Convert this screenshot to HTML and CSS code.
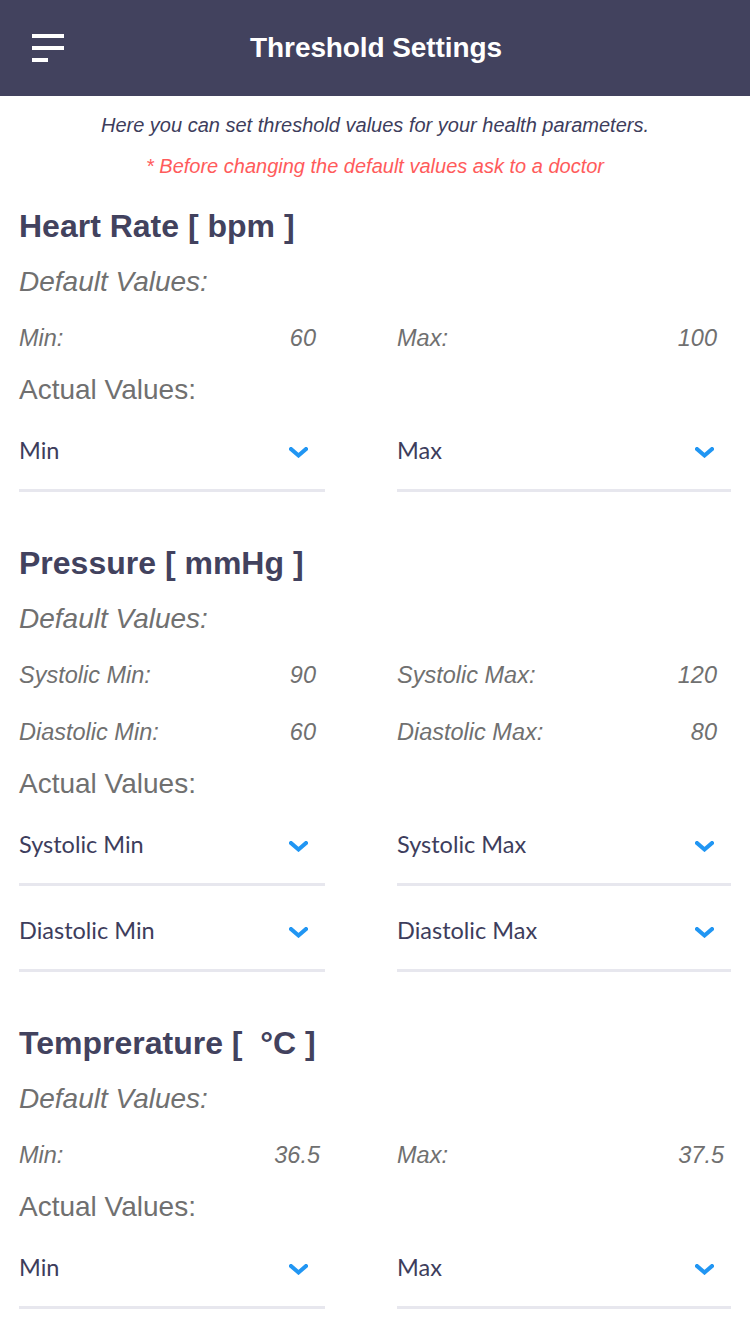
FILE: index.html
```html
<!DOCTYPE html>
<html lang="en">
<head>
<meta charset="utf-8">
<title>Threshold Settings</title>
<link rel="stylesheet" href="styles.css">
</head>
<body>
<header class="topbar">
  <div class="menu" aria-label="menu">
    <span class="bar"></span>
    <span class="bar"></span>
    <span class="bar bar-short"></span>
  </div>
  <h1 class="title">Threshold Settings</h1>
  <div class="spacer"></div>
</header>

<main class="content">
  <p class="intro">Here you can set threshold values for your health parameters.</p>
  <p class="note">* Before changing the default values ask to a doctor</p>

  <section class="param">
    <h2 class="param-title">Heart Rate [ bpm ]</h2>
    <p class="group-label defaults">Default Values:</p>
    <div class="grid rows">
      <div class="dv"><span>Min:</span><span>60</span></div>
      <div class="dv dv-right"><span>Max:</span><span>100</span></div>
    </div>
    <p class="group-label actual">Actual Values:</p>
    <div class="grid selects">
      <div class="select"><span>Min</span><svg class="chev" viewBox="0 0 19 11"><polyline points="2,2 9.5,8.5 17,2"/></svg></div>
      <div class="select"><span>Max</span><svg class="chev" viewBox="0 0 19 11"><polyline points="2,2 9.5,8.5 17,2"/></svg></div>
    </div>
  </section>

  <section class="param">
    <h2 class="param-title">Pressure [ mmHg ]</h2>
    <p class="group-label defaults">Default Values:</p>
    <div class="grid rows">
      <div class="dv"><span>Systolic Min:</span><span>90</span></div>
      <div class="dv dv-right"><span>Systolic Max:</span><span>120</span></div>
      <div class="dv"><span>Diastolic Min:</span><span>60</span></div>
      <div class="dv dv-right"><span>Diastolic Max:</span><span>80</span></div>
    </div>
    <p class="group-label actual">Actual Values:</p>
    <div class="grid selects">
      <div class="select"><span>Systolic Min</span><svg class="chev" viewBox="0 0 19 11"><polyline points="2,2 9.5,8.5 17,2"/></svg></div>
      <div class="select"><span>Systolic Max</span><svg class="chev" viewBox="0 0 19 11"><polyline points="2,2 9.5,8.5 17,2"/></svg></div>
      <div class="select"><span>Diastolic Min</span><svg class="chev" viewBox="0 0 19 11"><polyline points="2,2 9.5,8.5 17,2"/></svg></div>
      <div class="select"><span>Diastolic Max</span><svg class="chev" viewBox="0 0 19 11"><polyline points="2,2 9.5,8.5 17,2"/></svg></div>
    </div>
  </section>

  <section class="param">
    <h2 class="param-title">Temprerature [ &nbsp;°C ]</h2>
    <p class="group-label defaults">Default Values:</p>
    <div class="grid rows">
      <div class="dv dv-wide"><span>Min:</span><span>36.5</span></div>
      <div class="dv dv-right dv-wide"><span>Max:</span><span>37.5</span></div>
    </div>
    <p class="group-label actual">Actual Values:</p>
    <div class="grid selects">
      <div class="select"><span>Min</span><svg class="chev" viewBox="0 0 19 11"><polyline points="2,2 9.5,8.5 17,2"/></svg></div>
      <div class="select"><span>Max</span><svg class="chev" viewBox="0 0 19 11"><polyline points="2,2 9.5,8.5 17,2"/></svg></div>
    </div>
  </section>
</main>
</body>
</html>
```

FILE: styles.css
```css
* { box-sizing: border-box; }

html, body {
  margin: 0;
  padding: 0;
  background: #ffffff;
}

body {
  font-family: "Liberation Sans", Arial, sans-serif;
  width: 750px;
  overflow-x: hidden;
}

p, h1, h2 { margin: 0; }

/* Top bar */
.topbar {
  height: 96px;
  background: #42425e;
  display: grid;
  grid-template-columns: 1fr auto 1fr;
  align-items: center;
}

.menu {
  padding-left: 32px;
  display: flex;
  flex-direction: column;
  gap: 8px;
}

.bar {
  display: block;
  width: 32px;
  height: 4px;
  background: #ffffff;
}

.bar-short { width: 16px; }

.title {
  font-size: 28px;
  font-weight: 700;
  color: #ffffff;
  line-height: 32px;
  padding-left: 2px;
  letter-spacing: -0.1px;
}

/* Content */
.content {
  padding: 17px 0 0 19px;
}

.intro, .note {
  font-style: italic;
  font-size: 20px;
  line-height: 24px;
  text-align: center;
  margin-left: -19px;
}

.intro { color: #3d3d5c; }

.note {
  color: #ff5b5b;
  margin-top: 17px;
}

.param { padding-top: 30px; }
.param + .param { padding-top: 53px; }

.param-title {
  font-size: 32px;
  font-weight: 700;
  line-height: 36px;
  color: #42425e;
}

.group-label {
  font-size: 28px;
  line-height: 32px;
  color: #707070;
}

.defaults {
  font-style: italic;
  margin-top: 22px;
}

.actual { margin-top: 23px; }

.grid {
  display: grid;
  grid-template-columns: 306px 334px;
  column-gap: 72px;
}

.rows {
  margin-top: 27px;
  row-gap: 31px;
}

.dv {
  display: flex;
  justify-content: space-between;
  font-style: italic;
  font-size: 23.5px;
  line-height: 26px;
  color: #707070;
  padding-right: 9px;
}

.dv-right { padding-right: 14px; }
.dv.dv-wide { padding-right: 5px; }
.dv-right.dv-wide { padding-right: 7px; }

.selects {
  margin-top: 30px;
  row-gap: 30px;
}

.select {
  display: flex;
  justify-content: space-between;
  align-items: flex-start;
  font-family: Lato, "Liberation Sans", sans-serif;
  font-size: 23.5px;
  line-height: 28px;
  color: #3d3d5c;
  padding: 0 17px 25px 0;
  border-bottom: 3px solid #e7e7ee;
}

.chev {
  width: 19px;
  height: 11px;
  margin-top: 11px;
  fill: none;
  stroke: #2196f3;
  stroke-width: 4;
  stroke-linecap: square;
  stroke-linejoin: miter;
}
```
